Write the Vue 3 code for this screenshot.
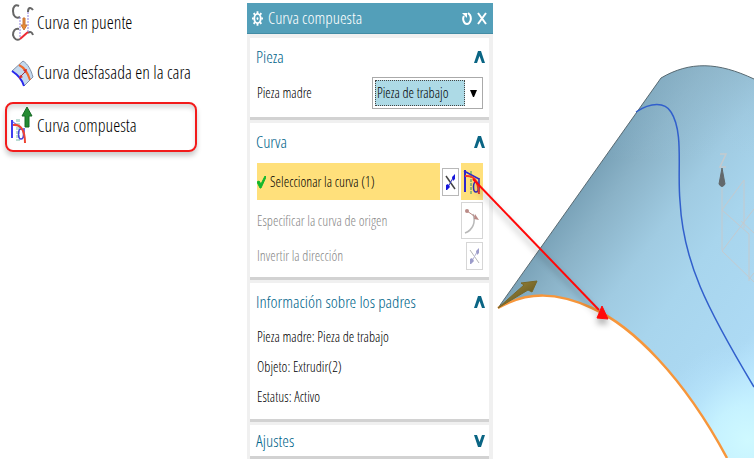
<script setup>
import { ref } from 'vue'

const commands = [
  { id: 'bridge', label: 'Curva en puente' },
  { id: 'offset', label: 'Curva desfasada en la cara' },
  { id: 'composite', label: 'Curva compuesta' }
]
const active = ref('composite')
const parent = ref('work')
const parents = ['Pieza madre: Pieza de trabajo', 'Objeto: Extrudir(2)', 'Estatus: Activo']
</script>

<template>
  <main class="page">
    <nav class="commands">
      <button
        v-for="c in commands"
        :key="c.id"
        type="button"
        class="command"
        :class="{ active: active === c.id }"
        @click="active = c.id"
      >
        <svg v-if="c.id === 'bridge'" class="command-icon" viewBox="0 0 24 38" fill="none">
          <path d="M8 3C4 1 2 4 2 8c0 5 3 8 7 6" stroke="#666" stroke-width="2" />
          <path d="M17 9c0-5 3-5 5-2M8 26c-4-1-6 2-6 6 1 4 4 6 7 4M17 30c2-2 4-1 5 2" stroke="#666" stroke-width="2" />
          <path d="M9 14v20M17 9v20" stroke="#8f80e0" stroke-dasharray="2 1" />
          <path d="M9 36l8-7" stroke="#ee2a35" stroke-width="2" />
          <path d="M12 15h2v7h2l-3 5-3-5h2z" fill="#e78b35" stroke="#c8743a" />
        </svg>
        <svg v-else-if="c.id === 'offset'" class="command-icon" viewBox="0 0 24 38" fill="none">
          <path d="M1 18L12 8c5 3 8 9 10 16l-9 9C11 26 7 22 1 18z" fill="#c4d9ee" stroke="#8191a8" />
          <path d="M1 18c6 4 10 8 12 15" stroke="#2828ee" stroke-width="2" />
          <path d="M8 12c6 3 9 8 11 15" stroke="#ef6a2c" stroke-width="2" />
          <path d="M9 24l6-6" stroke="#a03540" />
          <path d="M12 17l4-1-1 4zM9 22l3 2-4 2z" fill="#d92d2d" />
        </svg>
        <svg v-else class="command-icon" viewBox="0 0 24 38" fill="none">
          <path d="M1 32V14" stroke="#4040ef" stroke-width="2" />
          <path d="M1 15l11 9" stroke="#4040ef" />
          <path d="M6 13v22M8 13v22" stroke="#79b9aa" stroke-dasharray="3 1" />
          <ellipse cx="10" cy="28" rx="2.500" ry="5" stroke="#4543df" stroke-width="1.500" />
          <path d="M13 22v10" stroke="#4543df" stroke-width="1.500" />
          <path d="M2 19c7-1 12 4 12 18" stroke="#ef4433" stroke-width="2" />
          <path d="M16 1l5 9h-3v11h-4V10h-3z" fill="#258b32" stroke="#176a27" />
        </svg>
        <span>{{ c.label }}</span>
      </button>
    </nav>

    <section class="dialog" aria-labelledby="dialog-title">
      <header class="titlebar">
        <svg class="gear" viewBox="0 0 12 18" fill="none" stroke="#fff">
          <ellipse cx="6" cy="9" rx="3.500" ry="5" stroke-width="2" />
          <ellipse cx="6" cy="9" rx="1" ry="1.500" fill="#fff" stroke="none" />
          <path d="M6 1v3M6 14v3M0 9h2M10 9h2M2 3l1 2M10 3L9 5M2 15l1-2M10 15l-1-2" stroke-width="2" />
        </svg>
        <h1 id="dialog-title">Curva compuesta</h1>
        <button type="button" class="title-button" aria-label="Restablecer">
          <svg viewBox="0 0 10 16" fill="none" stroke="#fff" stroke-width="2">
            <path d="M2 6C0 9 2 14 5 14s5-5 3-9L6 3" />
            <path d="M0 3h5v5z" fill="#fff" stroke="none" />
          </svg>
        </button>
        <button type="button" class="title-button" aria-label="Cerrar">
          <svg viewBox="0 0 10 16" fill="none" stroke="#fff" stroke-width="2">
            <path d="M1 3l8 11M9 3L1 14" />
          </svg>
        </button>
      </header>

      <div class="body">
        <section class="group">
          <h2>
            <button type="button" class="group-title">Pieza
              <svg class="chevron" viewBox="0 0 11 14"><path d="M0 13L4 1h3l4 12H8L5.500 6 3 13z" /></svg>
            </button>
          </h2>
          <div class="field">
            <label for="parent">Pieza madre</label>
            <div class="combo">
              <select id="parent" v-model="parent">
                <option value="work">Pieza de trabajo</option>
              </select>
              <svg viewBox="0 0 7 7"><path d="M0 0h7L4 7H3z" /></svg>
            </div>
          </div>
        </section>

        <section class="group">
          <h2>
            <button type="button" class="group-title">Curva
              <svg class="chevron" viewBox="0 0 11 14"><path d="M0 13L4 1h3l4 12H8L5.500 6 3 13z" /></svg>
            </button>
          </h2>
          <div class="select-row">
            <div class="prompt">
              <svg viewBox="0 0 9 14"><path d="M0 7l2-1 2 3 4-8 1 1-5 11H3z" fill="#12b82d" stroke="#12b82d" /></svg>
              <span>Seleccionar la curva (1)</span>
            </div>
            <button type="button" class="tool small" aria-label="Invertir curva">
              <svg viewBox="0 0 11 20" fill="none">
                <path d="M1 4l9 13" stroke="#444" stroke-width="1.500" />
                <path d="M9 4L2 17" stroke="#3434c0" />
                <path d="M7 5l3-3v5l-2 2zM1 13l2-1 2 3-3 3H1z" fill="#1616dc" />
              </svg>
            </button>
            <button type="button" class="tool lit" aria-label="Regla de curva">
              <svg viewBox="0 0 20 30" fill="none">
                <path d="M3 25V3" stroke="#2d25cf" stroke-width="2" />
                <path d="M2 4l15 8" stroke="#2d25cf" stroke-width="1.500" />
                <path d="M9 4v24" stroke="#2f9271" stroke-dasharray="3 1" />
                <ellipse cx="14" cy="20" rx="2.500" ry="5" stroke="#3328be" stroke-width="1.500" />
                <path d="M17 11v14" stroke="#3328be" stroke-width="1.500" />
                <path d="M3 9c9-1 13 4 14 18" stroke="#ef3e2e" stroke-width="2" />
              </svg>
            </button>
          </div>
          <div class="option">
            <span>Especificar la curva de origen</span>
            <button type="button" class="tool" disabled aria-label="Curva de origen">
              <svg viewBox="0 0 20 30" fill="none">
                <path d="M11 8c3 8 0 16-8 19" stroke="#b8b8b8" stroke-width="1.500" />
                <path d="M5 5l10 7" stroke="#ba8b87" />
                <ellipse cx="5" cy="5" rx="2" ry="2" fill="#ba8b87" />
                <path d="M13 8l4 6-5-1z" fill="#ba8b87" />
              </svg>
            </button>
          </div>
          <div class="option last">
            <span>Invertir la dirección</span>
            <button type="button" class="tool small" disabled aria-label="Invertir la dirección">
              <svg viewBox="0 0 11 20" fill="none">
                <path d="M1 4l9 13" stroke="#b5b5b5" />
                <path d="M9 4L2 17" stroke="#b6b6d5" />
                <path d="M7 5l3-3v5l-2 2zM1 13l2-1 2 3-3 3H1z" fill="#9c9cca" />
              </svg>
            </button>
          </div>
        </section>

        <section class="group">
          <h2>
            <button type="button" class="group-title">Información sobre los padres
              <svg class="chevron" viewBox="0 0 11 14"><path d="M0 13L4 1h3l4 12H8L5.500 6 3 13z" /></svg>
            </button>
          </h2>
          <ul class="facts">
            <li v-for="p in parents" :key="p">{{ p }}</li>
          </ul>
        </section>

        <section class="group">
          <h2>
            <button type="button" class="group-title closed">Ajustes
              <svg class="chevron" viewBox="0 0 11 14"><path d="M0 1h3l2.500 7L8 1h3L7 13H4z" /></svg>
            </button>
          </h2>
        </section>
      </div>
    </section>

    <div class="viewport">
      <svg viewBox="493 0 261 458" role="img" aria-label="Cilindro extruido">
        <defs>
          <linearGradient id="skin" gradientUnits="userSpaceOnUse" x1="573" y1="186" x2="790" y2="344">
            <stop offset="0" stop-color="#759eb4" />
            <stop offset="0.140" stop-color="#8ab2c7" />
            <stop offset="0.360" stop-color="#a0cbe2" />
            <stop offset="0.550" stop-color="#a8d5ed" />
            <stop offset="0.860" stop-color="#addaf4" />
            <stop offset="1" stop-color="#bce8ff" />
          </linearGradient>
          <radialGradient id="glow" gradientUnits="userSpaceOnUse" cx="748" cy="440" r="100">
            <stop offset="0" stop-color="#cff9ff" />
            <stop offset="0.350" stop-color="#c7f3ff" stop-opacity="0.900" />
            <stop offset="1" stop-color="#b4e2ff" stop-opacity="0" />
          </radialGradient>
          <linearGradient id="top" gradientUnits="userSpaceOnUse" x1="700" y1="65" x2="700" y2="160">
            <stop offset="0" stop-color="#91b8cc" stop-opacity="0.500" />
            <stop offset="1" stop-color="#a3cde5" stop-opacity="0" />
          </linearGradient>
          <linearGradient id="brass" x1="0" y1="0" x2="1" y2="1">
            <stop offset="0" stop-color="#a99342" />
            <stop offset="1" stop-color="#514516" />
          </linearGradient>
        </defs>
        <path d="M661 78C690 61 718 62 754 79V458H727C683 376 632 326 592 308C557 292 528 291 498 308z" fill="url(#skin)" />
        <path d="M661 78C690 61 718 62 754 79V200H577z" fill="url(#top)" />
        <path d="M754 330V458H727C706 420 687 391 664 366z" fill="url(#glow)" />
        <path d="M498 308L661 78C690 61 718 62 754 79" fill="none" stroke="#596a72" />
        <g fill="none" stroke="#c4cace">
          <path d="M722 188V250M722 210L744 180V228M722 210L749 234V281M754 209L722 251L754 282M741 221L754 233M749 279L754 273" />
          <path d="M720 154H726L720 167H726" stroke-width="1.500" />
        </g>
        <path d="M722 168L725 184Q722 189 719 184z" fill="#62686b" stroke="#62686b" />
        <path d="M636 112C651 102 665 102 671 112C684 132 677 170 680 201C683 261 706 307 754 387" fill="none" stroke="#315fcc" stroke-width="1.500" />
        <path d="M498 308C528 291 557 292 592 308C632 326 683 376 727 458" fill="none" stroke="#f7963b" stroke-width="2.500" />
        <path d="M498 308L524 285L521 283L537 281L532 292L528 290z" fill="url(#brass)" stroke="#776729" />
      </svg>
    </div>

    <svg class="callout" width="160" height="160" viewBox="0 0 160 160" aria-hidden="true">
      <path d="M12 9L138 140" stroke="#ff0909" stroke-width="2" />
      <path d="M141 136L147 149L136 148z" fill="#ff0909" stroke="#ff0909" />
    </svg>
  </main>
</template>

<style>
body {
  margin: 0;
  background: #fff;
}
</style>

<style scoped>
.page {
  position: relative;
  display: grid;
  grid-template-columns: minmax(0, 247fr) minmax(0, 246fr) minmax(0, 261fr);
  align-items: stretch;
  padding: 3px 2px 2px 0;
  font: 14px/20px "Open Sans Condensed Light", "Roboto Condensed", "Noto Sans Condensed", Lato, sans-serif;
  color: #000;
}
button, select {
  font: inherit;
  color: inherit;
  margin: 0;
}
h1, h2, ul {
  margin: 0;
  padding: 0;
  font: inherit;
}
.commands {
  display: flex;
  flex-direction: column;
  align-items: stretch;
  padding: 0 50px 0 5px;
  font-size: 18px;
}
.command {
  display: flex;
  align-items: center;
  box-sizing: border-box;
  gap: 2px;
  height: 50px;
  padding: 0 4px 4px;
  border: 2px solid transparent;
  border-radius: 8px;
  background: none;
  text-align: left;
  white-space: nowrap;
}
.command:first-child {
  height: 42px;
  margin-bottom: 4px;
}
.command:nth-child(2) {
  margin-bottom: 3px;
}
.command.active {
  border-color: #f21b1b;
  box-shadow: 0 4px 5px #ccc, inset 0 4px 4px #ddd;
}
.command-icon {
  flex: none;
  width: 24px;
  height: 38px;
}
.dialog {
  background: #f0f0f0;
}
.titlebar {
  display: flex;
  align-items: center;
  gap: 5px;
  height: 31px;
  padding: 0 6px 0 5px;
  border-bottom: 1px solid #438ca5;
  box-sizing: border-box;
  background: #539fb9;
  color: #fff;
  font-size: 17px;
}
.titlebar h1 {
  flex: 1;
}
.gear {
  width: 11px;
  height: 17px;
}
.title-button {
  display: flex;
  padding: 0;
  border: 0;
  background: none;
}
.title-button svg {
  width: 10px;
  height: 16px;
}
.body {
  display: grid;
  gap: 3px;
  padding: 4px 4px 0 3px;
}
.group {
  padding: 0 6px;
  border-bottom: 3px solid #d2d2d2;
  background: #fff;
}
.group h2 {
  margin-right: -2px;
}
.group-title {
  display: flex;
  justify-content: space-between;
  align-items: center;
  width: 100%;
  height: 37px;
  padding: 0;
  border: 0;
  background: none;
  color: #00658a;
  font-size: 17px;
  text-align: left;
}
.group-title.closed {
  height: 31px;
}
.chevron {
  width: 11px;
  height: 14px;
  fill: #0a6584;
}
.field {
  display: flex;
  justify-content: space-between;
  align-items: center;
  padding: 2px 0 8px 1px;
}
.combo {
  display: flex;
  align-items: center;
  gap: 5px;
  box-sizing: border-box;
  width: 111px;
  height: 32px;
  padding: 2px 5px 2px 2px;
  border: 1px solid #aaa;
}
.combo select {
  flex: 1;
  min-width: 0;
  height: 26px;
  padding: 0 1px;
  border: 1px dotted #444;
  border-radius: 0;
  background: #addae6;
  appearance: none;
}
.combo svg {
  width: 7px;
  height: 7px;
}
.select-row {
  display: flex;
  align-items: center;
  gap: 2px;
  padding: 3px 0 2px 1px;
}
.prompt {
  display: flex;
  flex: 1;
  align-items: center;
  gap: 4px;
  height: 37px;
  background: #ffe07b;
  white-space: nowrap;
}
.prompt svg {
  width: 9px;
  height: 14px;
}
.tool {
  display: flex;
  justify-content: center;
  align-items: center;
  box-sizing: border-box;
  width: 22px;
  height: 37px;
  padding: 0;
  border: 1px solid #d0d0d0;
  background: #fff;
}
.tool svg {
  width: 20px;
  height: 30px;
}
.tool.small {
  width: 17px;
  height: 28px;
  border-color: #b8b8b8;
}
.tool.small svg {
  width: 11px;
  height: 20px;
}
.tool.lit {
  border-color: #ffe07b;
  background: #ffe07b;
}
.tool:disabled {
  border-color: #d6d6d6;
}
.option {
  display: flex;
  justify-content: space-between;
  align-items: center;
  padding-left: 1px;
  color: #888;
}
.option.last {
  padding-top: 3px;
  padding-bottom: 7px;
}
.facts {
  padding: 2px 0 7px 1px;
  list-style: none;
}
.facts li {
  line-height: 30px;
}
.viewport {
  min-width: 0;
  margin-top: -3px;
}
.viewport svg {
  display: block;
  width: 100%;
  height: auto;
}
.callout {
  position: absolute;
  top: 170px;
  left: 461px;
  overflow: visible;
  filter: drop-shadow(0 5px 3px #0005);
  pointer-events: none;
}
</style>
